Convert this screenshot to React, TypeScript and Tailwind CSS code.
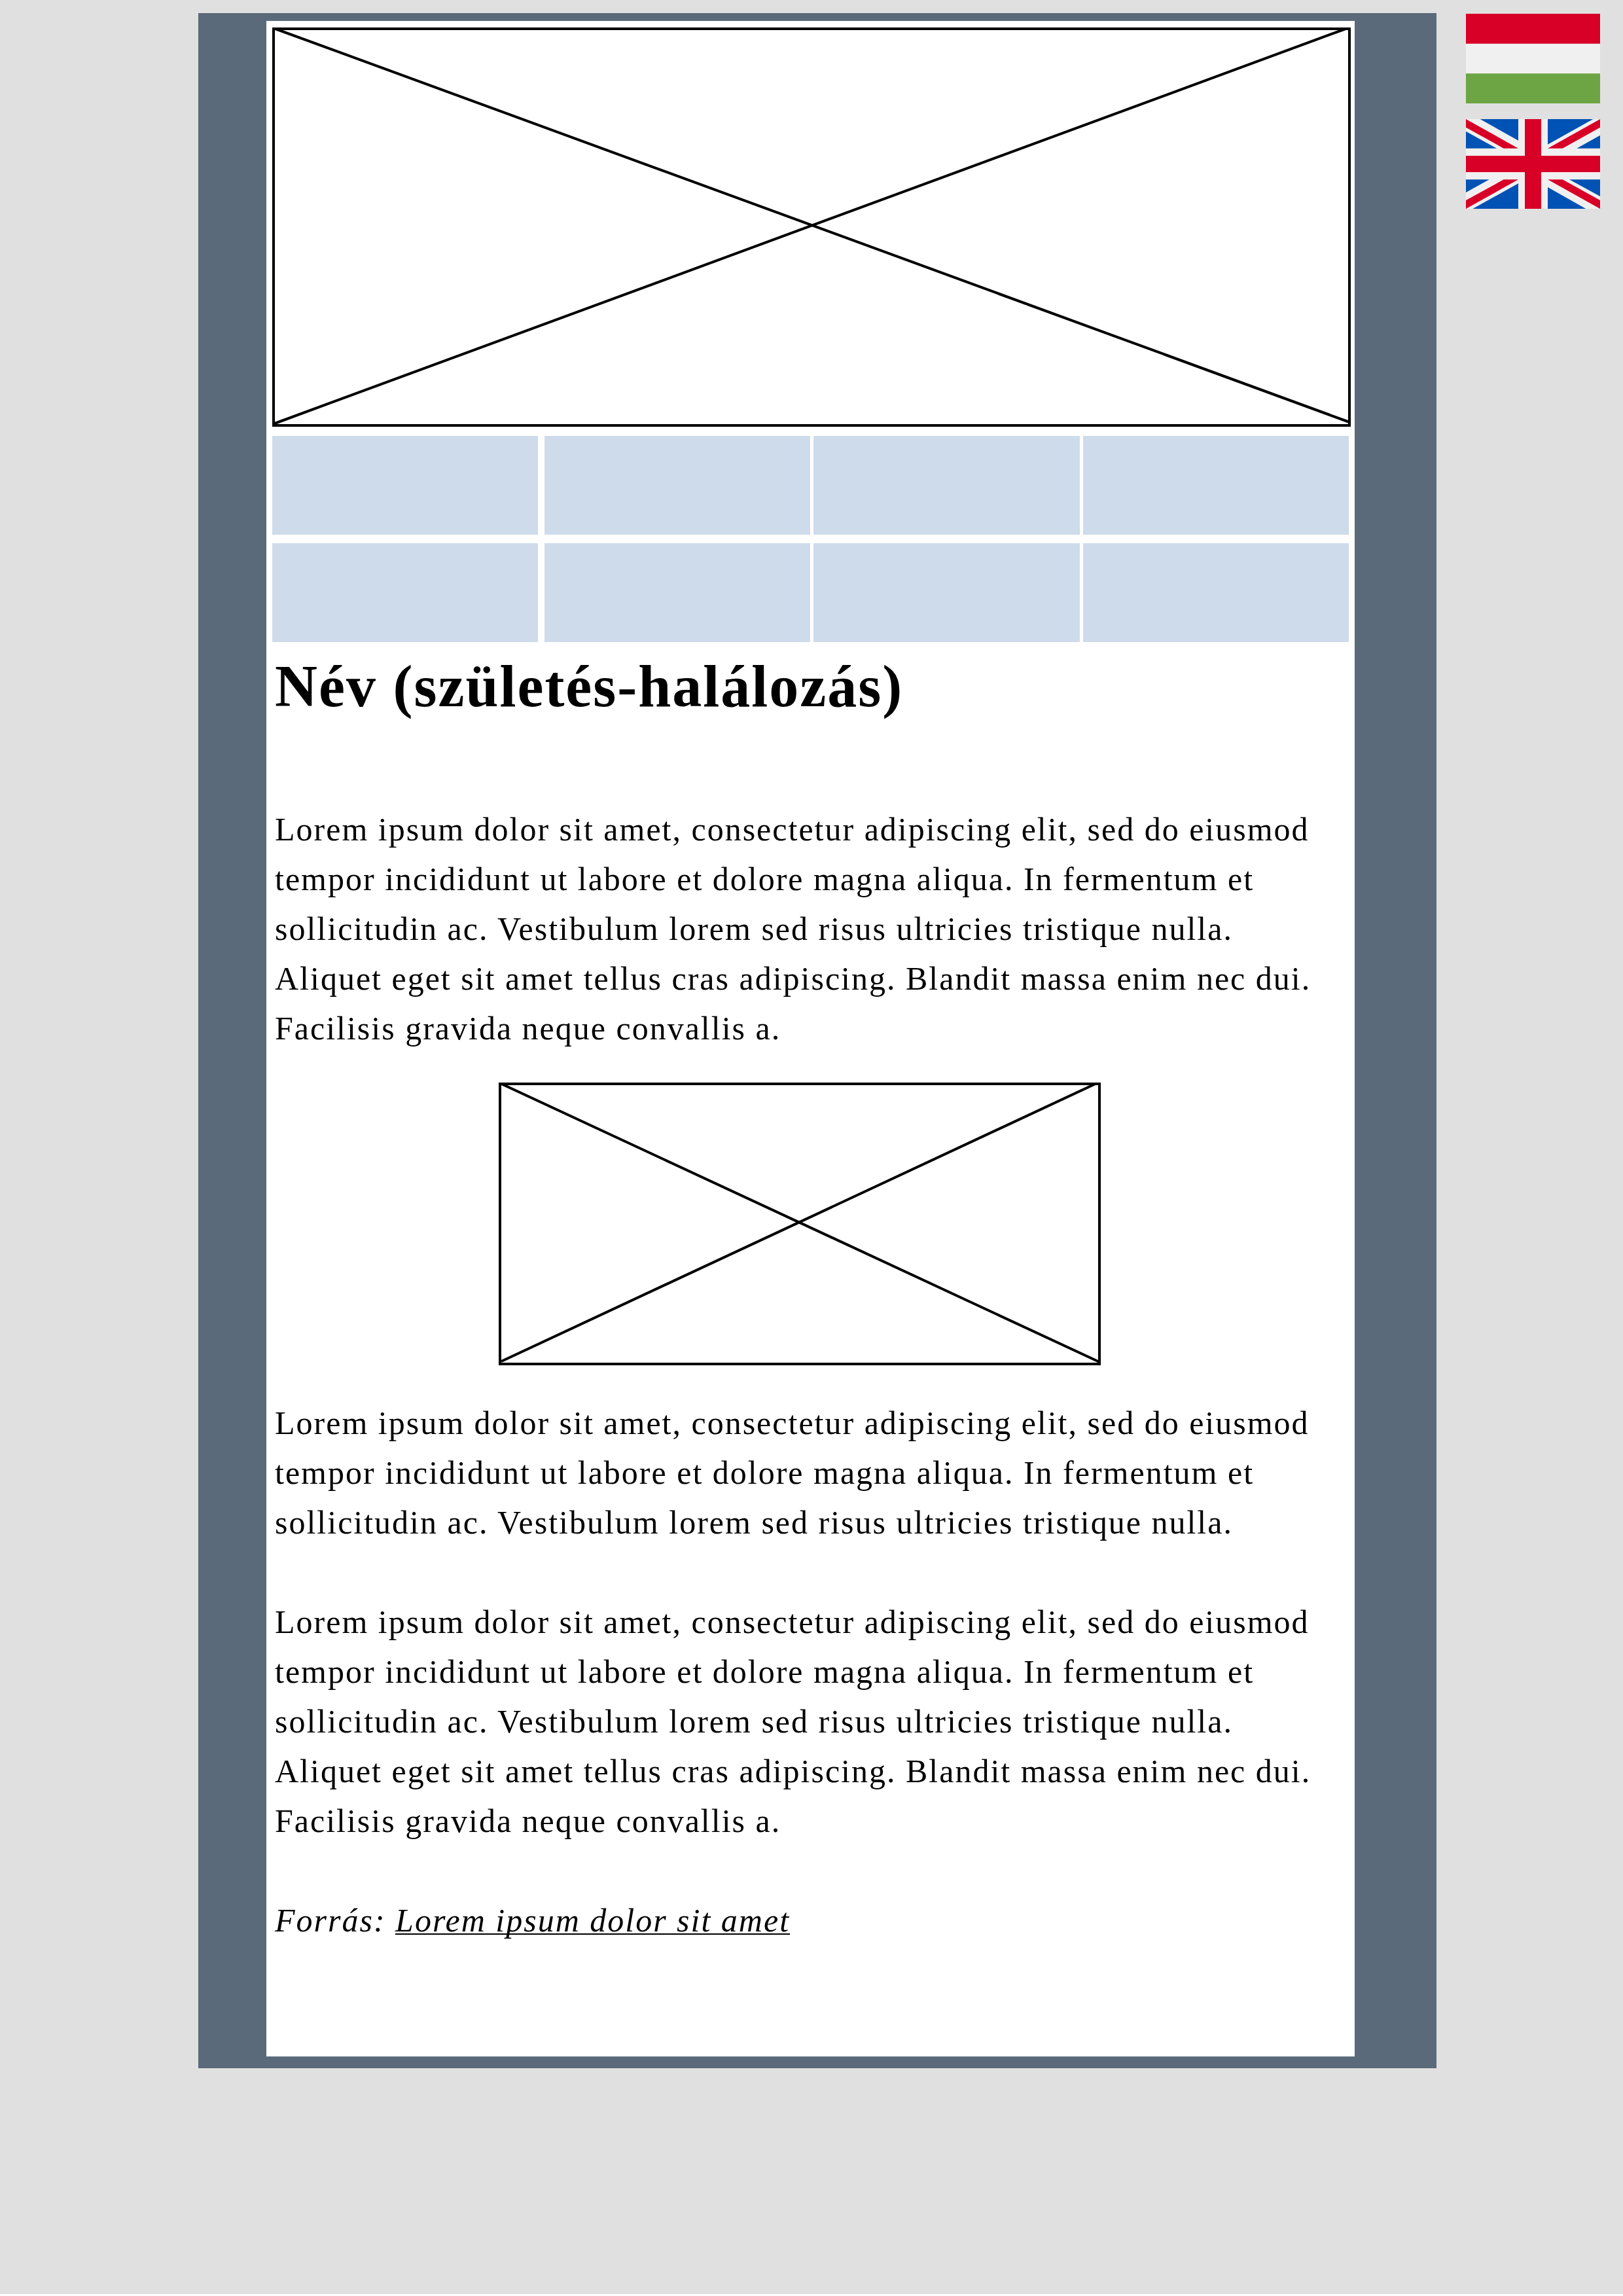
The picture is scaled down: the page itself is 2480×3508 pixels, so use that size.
const opening =
  "Lorem ipsum dolor sit amet, consectetur adipiscing elit, sed do eiusmod tempor incididunt ut labore et dolore magna aliqua. In fermentum et sollicitudin ac. Vestibulum lorem sed risus ultricies tristique nulla.";
const closing =
  "Aliquet eget sit amet tellus cras adipiscing. Blandit massa enim nec dui. Facilisis gravida neque convallis a.";

function Banner() {
  return (
    <svg viewBox="0 0 1648 610" className="block w-full" fill="none" stroke="#000" strokeWidth="4" aria-hidden="true">
      <rect x="2" y="2" width="1644" height="606" />
      <path d="M2 1L1646 603M1643 1L1 606" />
    </svg>
  );
}

function Illustration() {
  return (
    <svg viewBox="0 0 920 432" className="mx-auto block w-[920px] max-w-full" fill="none" stroke="#000" strokeWidth="4" aria-hidden="true">
      <rect x="2" y="2" width="916" height="428" />
      <path d="M2 1L918 427M914 1L4 426" />
    </svg>
  );
}

function HungarianFlag() {
  return (
    <svg viewBox="0 0 615 411" className="block h-[137px] w-[205px]" aria-hidden="true">
      <path fill="#f0f0f0" d="M0 0h615v411H0z" />
      <path fill="#d80027" d="M0 0h615v137H0z" />
      <path fill="#6da544" d="M0 274h615v137H0z" />
    </svg>
  );
}

function BritishFlag() {
  return (
    <svg viewBox="0 0 615 411" className="block h-[137px] w-[205px]" aria-hidden="true">
      <path fill="#f0f0f0" d="M0 0h615v411H0z" />
      <path
        fill="#0052b4"
        d="M65 0H240V98zM0 56V134H141zM375 0H583L375 116zM615 74V134H508zM0 277H107L0 336zM240 295V411H31zM375 312V411H550zM474 277H615V354z"
      />
      <path
        fill="#d80027"
        d="M270 0h75v168h270v75H345v168h-75V243H0v-75h270zM0 0V38L173 134H240zM615 0V38L443 134H375zM240 277H173L0 372V411zM375 277H443L615 372V411z"
      />
    </svg>
  );
}

function MenuTile({ label }: { label: string }) {
  return <a href="#" aria-label={label} className="block h-[151px] bg-[#cedbeb]" />;
}

function MenuRow({ first }: { first: number }) {
  return (
    <div className="grid grid-cols-[406fr_1229fr] gap-[10px]">
      <MenuTile label={`Menü ${first}`} />
      <div className="grid grid-cols-3 gap-[5px]">
        <MenuTile label={`Menü ${first + 1}`} />
        <MenuTile label={`Menü ${first + 2}`} />
        <MenuTile label={`Menü ${first + 3}`} />
      </div>
    </div>
  );
}

export default function App() {
  return (
    <div className="grid min-h-screen grid-cols-[303fr_1892fr_285fr] items-start border-b-[3px] border-white bg-[#e0e0e0] pt-5 font-['Liberation_Serif',serif] text-black">
      <div className="col-start-2 bg-[#5b6a7a] pt-3 pr-[125px] pb-[18px] pl-[104px]">
        <main className="bg-white pt-[10px] pr-[6px] pb-[170px] pl-[9px]">
          <Banner />
          <nav aria-label="Menü" className="mt-[14px] flex flex-col gap-[13px] pr-[3px]">
            <MenuRow first={1} />
            <MenuRow first={5} />
          </nav>
          <article className="mt-[18px] pr-[40px] pl-1 text-[50px] leading-[76px] tracking-[2px]">
            <h1 className="text-[90px] leading-[100px] font-bold">Név (születés-halálozás)</h1>
            <p className="mt-[130px] mb-[45px]">
              {opening} {closing}
            </p>
            <Illustration />
            <p className="mt-[50px]">{opening}</p>
            <p className="mt-[76px]">
              {opening} {closing}
            </p>
            <p className="mt-[76px] italic">
              Forrás:{" "}
              <a href="#" className="underline decoration-2 underline-offset-[3px] [text-decoration-skip-ink:none]">
                Lorem ipsum dolor sit amet
              </a>
            </p>
          </article>
        </main>
      </div>
      <div className="mt-px flex flex-col gap-6 pl-[45px]">
        <button type="button" aria-label="Magyar">
          <HungarianFlag />
        </button>
        <button type="button" aria-label="English">
          <BritishFlag />
        </button>
      </div>
    </div>
  );
}
